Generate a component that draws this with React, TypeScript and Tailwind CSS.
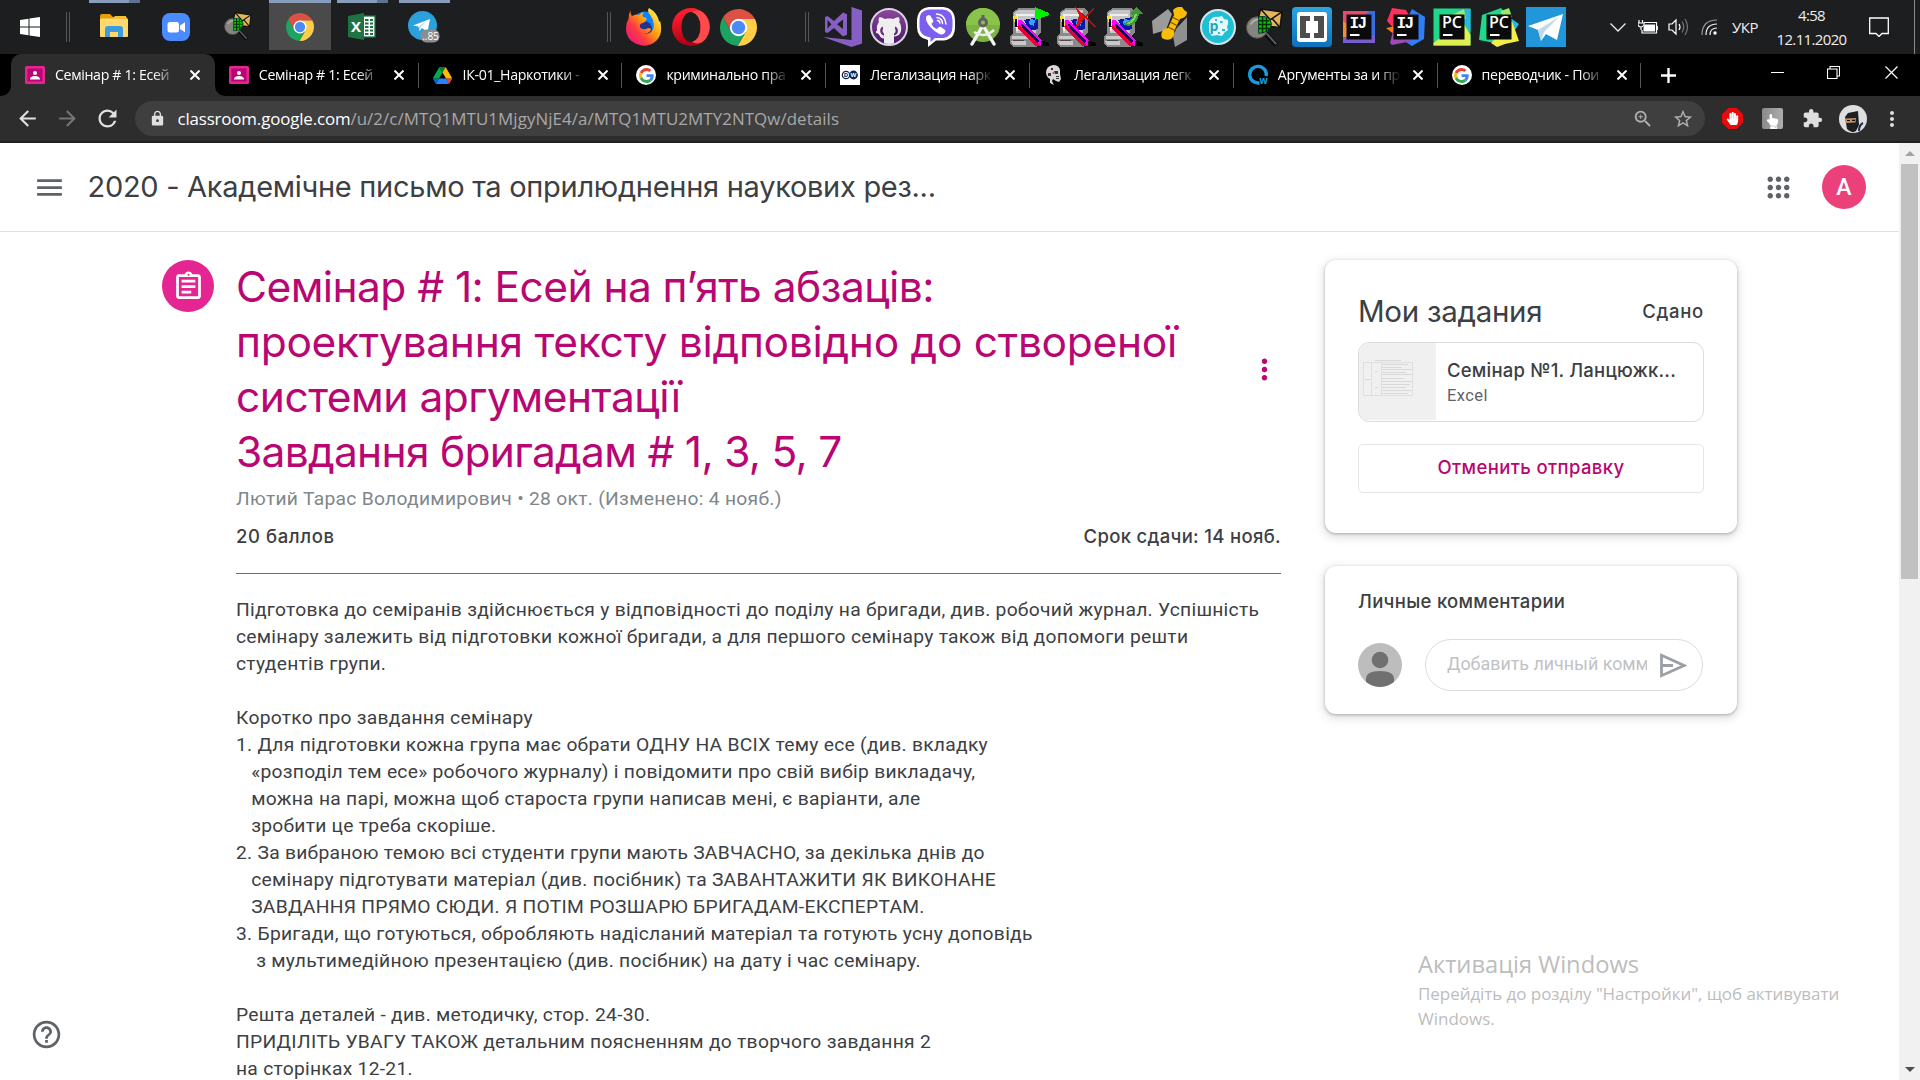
import type { ReactNode } from "react";
import {
  MdArrowBack,
  MdArrowForward,
  MdExtension,
  MdHelpOutline,
  MdLock,
  MdMenu,
  MdMoreVert,
  MdRefresh,
  MdStarBorder,
  MdZoomIn,
} from "react-icons/md";
import { FaGithubAlt, FaHandPaper, FaHandPointUp } from "react-icons/fa";

/* ---------- application icons ---------- */

function Chrome({ className }: { className: string }) {
  return (
    <svg viewBox="0 0 48 48" className={className}>
      <path d="M3.8 11.05A24 24 0 0 1 45.3 13H24V24L14.47 29.5Z" fill="#dd5144" />
      <path d="M45.3 13A24 24 0 0 1 22.88 47.95L33.53 29.5L24 24V13Z" fill="#ffcd46" />
      <path d="M22.88 47.95A24 24 0 0 1 3.8 11.05L14.47 29.5L24 24L33.53 29.5Z" fill="#1da462" />
      <circle cx="24" cy="24" r="11.2" fill="#fff" />
      <circle cx="24" cy="24" r="8.8" fill="#4c8bf5" />
    </svg>
  );
}

function Explorer() {
  return (
    <svg viewBox="0 0 28 25" className="h-[25px] w-[28px]">
      <path d="M0 2a2 2 0 0 1 2-2h8l3 3h13a1.500 1.500 0 0 1 1.500 1.500V20H0Z" fill="#e3a008" />
      <path d="M1 4h12l2-2h11v4H1Z" fill="#f5bf3c" />
      <path d="M0 5h28v17a1 1 0 0 1-1 1H1a1 1 0 0 1-1-1Z" fill="#ffd96b" />
      <path d="M5 23v-8a3 3 0 0 1 3-3h12a3 3 0 0 1 3 3v8h-5v-5h-8v5Z" fill="#3f9be0" />
    </svg>
  );
}

function Zoom() {
  return (
    <svg viewBox="0 0 28 28" className="h-[28px] w-[28px]">
      <rect width="28" height="28" rx="8" fill="#4a8cff" />
      <rect x="5.500" y="9" width="11.500" height="10.500" rx="2.500" fill="#fff" />
      <path d="M18 12.500l5-3.300v10l-5-3.300Z" fill="#fff" />
    </svg>
  );
}

function MailMagnifier({ className }: { className: string }) {
  return (
    <svg viewBox="0 0 38 40" className={className}>
      <path d="M20 26L31 38" stroke="#0c0c0c" strokeWidth="5" />
      <path d="M21 26L31 37" stroke="#5d5d5d" strokeWidth="2" />
      <circle cx="11.500" cy="20" r="11" fill="#85857f" stroke="#55554f" />
      <path d="M5 17q3-6 9-5" stroke="#b9b9b2" strokeWidth="1.500" fill="none" />
      <path d="M15 1L37 4L35 20L24 19L13 9Z" fill="#e3b45a" stroke="#111" strokeWidth="1.600" />
      <path d="M15 1L25 12L37 4M27 11L35 20" fill="none" stroke="#111" strokeWidth="1.500" />
      <path d="M13 9q12-2 13 7q0 9-13 10Z" fill="#00c800" stroke="#033" />
      <path d="M13 13h11M13 17h13M13 21h12M17 9v17M21 10v15" stroke="#053005" strokeWidth="1.500" />
    </svg>
  );
}

function Excel() {
  return (
    <svg viewBox="0 0 28 27" className="h-[27px] w-[28px]">
      <rect x="13" y="3" width="14" height="21" fill="#fff" stroke="#1f7244" strokeWidth="1.300" />
      <path d="M17 7h3.500M22 7h3M17 10.500h3.500M22 10.500h3M17 14h3.500M22 14h3M17 17.500h3.500M22 17.500h3M17 21h3.500M22 21h3" stroke="#1f7244" strokeWidth="2" />
      <path d="M0 3L16 0V27L0 24Z" fill="#1f7244" />
      <text x="8" y="19" textAnchor="middle" className="fill-white font-['Open_Sans'] text-[15px] font-bold">X</text>
    </svg>
  );
}

function TelegramBadge() {
  return (
    <svg viewBox="0 0 32 32" className="h-[32px] w-[32px]">
      <circle cx="14.500" cy="14.500" r="14.500" fill="#2ba0dc" />
      <path d="M5 14.500L22 8L19.500 21L14 17L11.500 20L10.500 15.500Z" fill="#fff" />
      <path d="M10.500 15.500L19 10L12 16.500L11.500 20Z" fill="#b8d4e6" />
      <rect x="12.500" y="18.500" width="19" height="13" rx="6" fill="#8d8d8d" />
      <text x="22.500" y="28.500" textAnchor="middle" className="fill-white font-['Open_Sans'] text-[10px]">..85</text>
    </svg>
  );
}

function Firefox() {
  return (
    <svg viewBox="0 0 36 38" className="h-[38px] w-[36px]">
      <defs>
        <linearGradient id="ffx" x1="1" y1="0" x2="0" y2="0.900">
          <stop offset="0.100" stopColor="#fff44f" />
          <stop offset="0.450" stopColor="#ff980e" />
          <stop offset="0.700" stopColor="#ff3647" />
          <stop offset="1" stopColor="#e31587" />
        </linearGradient>
      </defs>
      <circle cx="19" cy="16" r="12.500" fill="#0a84ff" />
      <circle cx="18" cy="21" r="8" fill="#26308f" />
      <path d="M4.500 2q-.5 4 1.500 6q4-2.500 7-1q2-2.500 5-3q-2.500 3-1 5q4 .5 3.500 2.500q-1 3-5.500 4q-2 2-.5 4.500q4 2.500 7.500 0q3 0 3 2q-3 4-7.500 3.500q7 1.500 10-5q1.500-7-3-13q-4-4-1.500-7.500q8 4.500 10 13q1 1.500 1-.5q3.500 13-3.500 20q-6 6-14 5Q3 35.500.5 25Q-1 16 2.500 11Q2.500 6 4.500 2Z" fill="url(#ffx)" />
    </svg>
  );
}

function Opera() {
  return (
    <svg viewBox="0 0 38 38" className="h-[38px] w-[38px]">
      <defs>
        <linearGradient id="opr" x1="0" y1="0" x2="0.300" y2="1">
          <stop offset="0.200" stopColor="#ff1b2d" />
          <stop offset="1" stopColor="#a70014" />
        </linearGradient>
      </defs>
      <path fillRule="evenodd" d="M19 0a19 19 0 1 1 0 38a19 19 0 1 1 0-38ZM19 4c-5 0-9.500 6-9.500 15s4.500 15 9.500 15s9.500-6 9.500-15s-4.500-15-9.500-15Z" fill="url(#opr)" />
      <path d="M20 4q6-3 11 .5a19 19 0 0 1 0 29q-5 3.500-11 .5q8.500-3 8.500-15t-8.500-15Z" fill="#ff4b4b" />
    </svg>
  );
}

function VisualStudio() {
  return (
    <svg viewBox="0 0 39 40" className="h-[40px] w-[39px]">
      <path d="M28.500 0L39 3.500V36.500L28.500 40L0 30L28.500 33Z" fill="#865fc5" />
      <path fillRule="evenodd" d="M2 10l2.500-1l6.500 5l9-8.500l4 1.800v20.400l-4 1.800l-9-8.500l-6.500 5l-2.500-1ZM4.500 13v8.500l4-4.200ZM14 17.300l6 4.700v-9.500Z" fill="#865fc5" />
    </svg>
  );
}

function GitHub() {
  return (
    <div className="relative flex size-[38px] justify-center overflow-hidden rounded-full border-2 border-[#ddd0e4] bg-gradient-to-b from-[#8b469b] to-[#4a1a66]">
      <FaGithubAlt className="mt-[4px] size-[26px] text-[#eee]" />
      <svg viewBox="0 0 34 34" className="absolute inset-0 size-full">
        <path d="M11 14h12v5q0 2-1 3v12H12V22q-1-1-1-3Z" fill="#eee" />
        <path d="M4 22q4 0 5 4q1 2 4 1.500" fill="none" stroke="#eee" strokeWidth="2" />
      </svg>
    </div>
  );
}

function Viber() {
  return (
    <svg viewBox="0 0 38 40" className="h-[40px] w-[38px]">
      <path d="M12 0h14q12 1 12 14v6q0 12-11 13.500h-8L11 40v-7Q0 31 0 20v-7Q1 1 12 0Z" fill="#fff" />
      <path d="M12 2.500h14q9.500 1 9.500 11v6q0 10-9 11.500h-8.500l-4.500 4v-4.500Q2.500 29 2.500 20v-7q0-9.500 9.500-10.500Z" fill="#7d5ff0" />
      <path d="M9 10q2.500-3.500 4.500-1l2.500 4q1 2-1.500 3.500q1 4 5.500 5.500q2-3 4-2l4 3q1.500 1.500-1.500 4q-2 1-5-.5Q12 21 9 13Z" fill="#fff" />
      <path d="M19.500 7q8.500.5 9.500 10M20 10.500q5 .5 5.500 6M20.500 13.500q2 0 2.300 2.500" fill="none" stroke="#fff" strokeWidth="1.500" strokeLinecap="round" />
    </svg>
  );
}

function AndroidStudio() {
  return (
    <svg viewBox="0 0 34 38" className="h-[38px] w-[34px]">
      <circle cx="17" cy="17" r="17" fill="#7cb342" />
      <path d="M0 17a17 17 0 0 1 34 0Z" fill="#8bc34a" />
      <path d="M16 19L6 36M18 19L28 36" stroke="#f5f5f5" strokeWidth="3.400" strokeLinecap="round" />
      <path d="M8 24q10 7 20-2" fill="none" stroke="#eee" strokeWidth="2.500" />
      <path d="M15.500 7h3v4h-3Z" fill="#616161" />
      <circle cx="17" cy="14.500" r="3.500" fill="#8bc34a" stroke="#616161" strokeWidth="3" />
    </svg>
  );
}

function PixelPc({ mark }: { mark: "play" | "cross" | "arrow" }) {
  return (
    <svg viewBox="0 0 40 40" className="size-[40px]" shapeRendering="crispEdges">
      <path d="M3 5L9 1H27L31 4V26L27 29H6L3 27Z" fill="#8a8a8a" />
      <path d="M4 6L9 3H26V26H6Z" fill="#c6c6c6" />
      <path d="M6 7H24V9H6ZM6 7H8V24H6Z" fill="#efefef" />
      <path d="M0 29L4 26H24L30 32V38L26 40H3L0 37Z" fill="#8a8a8a" />
      <path d="M2 29H20V32H2ZM1 34H16V38H3Z" fill="#c9c9c9" />
      <path d="M3 33H14V34H3Z" fill="#4a4a4a" />
      <path d="M14 13L28 10V22L20 24Z" fill="#0a18a8" />
      <path d="M20 12L25 13L24 19L19 17Z" fill="#3aa0ff" />
      <path d="M3 9H7V14H10L8 19L4 15Z" fill="#f2e23a" />
      <path d="M5 12H7V20H5Z" fill="#000" />
      <path d="M8 13L11 13L32 34L34 39H28L8 20Z" fill="#ff00ff" />
      <path d="M7 19L9 18L30 39H26L9 23Z" fill="#e8003a" />
      <path d="M11 17L13 17L29 34L28 36L26 35L12 20Z" fill="#12005c" />
      <path d="M31 34H34L39 36V39H31Z" fill="#050505" />
      {mark === "play" && <path d="M25 0L39 6L39 8L25 13Z" fill="#00f000" />}
      {mark === "cross" && (
        <>
          <path d="M18 0L24 5L27 10L23 18L18 21L21 13L22 8Z" fill="#d81414" />
          <path d="M24 14L37 2M25 6L38 20" stroke="#c01010" strokeWidth="1.500" />
        </>
      )}
      {mark === "arrow" && (
        <>
          <path d="M18 16q8 0 11-8l-3-1l6-7l7 7h-4q-2 11-11 12Z" fill="#3f9a35" />
          <path d="M22 16q7-1 9-9h2q-2 9-9 10Z" fill="#7fd069" />
        </>
      )}
    </svg>
  );
}

function NutBolt() {
  return (
    <svg viewBox="0 0 37 40" className="h-[40px] w-[37px]">
      <path d="M0 14L16 2L20 7L14 23L1 27Z" fill="#9b9b9b" />
      <path d="M24 22L35 10V33L23 40L21 29Z" fill="#8f8f8f" />
      <path d="M21 3q4-4 9-3q2 4 5 5q0 4-4 6l-3 1l-6 12q1 5-3 8q-5 2-9-1q-2-5 2-9l4-1l6-13Z" fill="#fbbc04" />
      <path d="M20 10l8 4M18 15l8 4M16 20l8 4" stroke="#6b5310" strokeWidth="1.200" />
    </svg>
  );
}

function Processing() {
  return (
    <svg viewBox="0 0 36 36" className="size-[36px]">
      <circle cx="18" cy="18" r="17" fill="#1fbfd6" stroke="#d5e5e8" strokeWidth="2" />
      <path d="M9 13q3-6 9-5l4-1l2 3l4 1v4l-1 3l1 3l-3 2l-3 4l-5-1l-5 1l-3-4Z" fill="#e6f8fb" />
      <path d="M20 12h2.500v2H20ZM22 20h3v2h-3ZM18 23h2v2h-2ZM15 10h2v2h-2Z" fill="#1fbfd6" />
      <text x="14" y="22" textAnchor="middle" className="fill-[#1fa5bd] font-['Open_Sans'] text-[14px] font-bold">p</text>
    </svg>
  );
}

function Brackets() {
  return (
    <svg viewBox="0 0 40 40" className="size-[40px]">
      <defs>
        <linearGradient id="brk" x1="0" y1="0" x2="0" y2="1">
          <stop offset="0" stopColor="#2ca5e0" />
          <stop offset="1" stopColor="#0a72bd" />
        </linearGradient>
      </defs>
      <rect width="40" height="40" rx="4" fill="url(#brk)" />
      <rect x="5" y="5" width="30" height="30" rx="3" fill="#fff" />
      <path d="M8 9h10v5h-4v12h4v5H8ZM32 9H22v5h4v12h-4v5h10Z" fill="#4d4d4d" />
    </svg>
  );
}

function JetBrains({ kind, label }: { kind: "ij" | "ij2" | "pc" | "pc2"; label: string }) {
  return (
    <svg viewBox="0 0 40 40" className="size-[40px]">
      {kind === "ij" && (
        <>
          <path d="M4 4H36V36H4Z" fill="#3a6be0" />
          <path d="M4 4H30L24 10L4 22Z" fill="#e84a6f" />
          <path d="M4 14L12 20L9 30L4 32Z" fill="#f28c38" />
          <path d="M4 30L36 28V36H4Z" fill="#7b5bd0" />
        </>
      )}
      {kind === "ij2" && (
        <>
          <path d="M6 1L20 3L24 10L10 24L1 14Z" fill="#fe315d" />
          <path d="M26 2L39 10L38 32L26 39L12 30Z" fill="#2d7ff9" />
          <path d="M0 21L10 19L9 28Z" fill="#f97a12" />
          <path d="M7 24L26 34L6 38L4 36Z" fill="#a04bb5" />
        </>
      )}
      {kind === "pc" && (
        <>
          <path d="M1.500 1.500H38.500V38.500H1.500Z" fill="#21d789" />
          <path d="M26 2H38.500V24L30 14Z" fill="#22b8e8" />
          <path d="M1.500 36L30 14L38.500 28V38.500H1.500Z" fill="#dff052" />
          <path d="M20 8L32 2L34 12Z" fill="#9be86a" />
        </>
      )}
      {kind === "pc2" && (
        <>
          <path d="M3 8L22 1L30 10L16 36L0 33Z" fill="#21d789" />
          <path d="M22 4L30 1L33 10L24 14Z" fill="#9be86a" />
          <path d="M30 10L40 17L34 26Z" fill="#22b8e8" />
          <path d="M12 36L33 14L40 34L26 37L18 40Z" fill="#f2ee4a" />
        </>
      )}
      <rect x="7.500" y="7.500" width="25" height="25" fill="#0b0b0b" />
      <text
        x={label === "PC" ? 20 : 18.5}
        y="21"
        textAnchor="middle"
        className={label === "PC" ? "fill-white font-['Open_Sans'] text-[16px] font-semibold" : "fill-white font-['Liberation_Mono'] text-[16px] font-bold tracking-[-1.500px]"}
      >
        {label}
      </text>
      <path d="M11 28h9.500" stroke="#fff" strokeWidth="2" />
    </svg>
  );
}

function TelegramSquare() {
  return (
    <svg viewBox="0 0 40 40" className="size-[40px]">
      <rect width="40" height="40" fill="#2196d8" />
      <path d="M2 19L37 7L31 33L20 27L15 34L12 23Z" fill="#fff" />
      <path d="M12 23L33 10L18 25L15 34Z" fill="#c0d8e8" />
    </svg>
  );
}

function GoogleG() {
  return (
    <span className="flex size-[20px] items-center justify-center rounded-full bg-white">
      <svg viewBox="0 0 48 48" className="size-[15px]">
        <path fill="#EA4335" d="M24 9.500c3.540 0 6.710 1.220 9.210 3.600l6.850-6.850C35.900 2.380 30.470 0 24 0 14.620 0 6.510 5.380 2.560 13.220l7.980 6.190C12.430 13.720 17.740 9.500 24 9.500z" />
        <path fill="#4285F4" d="M46.980 24.550c0-1.570-.15-3.090-.38-4.550H24v9.020h12.940c-.58 2.960-2.260 5.480-4.780 7.180l7.730 6c4.510-4.180 7.090-10.360 7.090-17.650z" />
        <path fill="#FBBC05" d="M10.530 28.590c-.48-1.450-.76-2.990-.76-4.590s.27-3.140.76-4.590l-7.980-6.190C.92 16.460 0 20.120 0 24c0 3.880.92 7.540 2.560 10.780l7.970-6.190z" />
        <path fill="#34A853" d="M24 48c6.480 0 11.930-2.130 15.890-5.810l-7.730-6c-2.150 1.450-4.920 2.300-8.160 2.300-6.260 0-11.570-4.220-13.470-9.910l-7.980 6.190C6.510 42.620 14.620 48 24 48z" />
      </svg>
    </span>
  );
}

function ClassroomIcon() {
  return (
    <svg viewBox="0 0 20 18" className="h-[18px] w-[20px]">
      <rect width="20" height="18" rx="1.500" fill="#e52592" />
      <rect x="2.500" y="2.500" width="15" height="13" fill="#b80672" />
      <circle cx="10" cy="7" r="2" fill="#fff" />
      <path d="M5 13.500q0-3.500 5-3.500t5 3.500Z" fill="#fff" />
    </svg>
  );
}

function DriveIcon() {
  return (
    <svg viewBox="0 0 87.300 78" className="h-[17px] w-[19px]">
      <path d="m6.600 66.850 3.850 6.650c.8 1.400 1.950 2.500 3.300 3.300l13.750-23.800h-27.500c0 1.550.4 3.100 1.200 4.500z" fill="#0066da" />
      <path d="m43.650 25-13.750-23.800c-1.350.8-2.500 1.900-3.300 3.300l-25.400 44a9.060 9.060 0 0 0-1.200 4.500h27.500z" fill="#00ac47" />
      <path d="m73.550 76.800c1.350-.8 2.500-1.900 3.300-3.300l1.600-2.750 7.650-13.250c.8-1.400 1.200-2.950 1.200-4.500h-27.502l5.852 11.500z" fill="#ea4335" />
      <path d="m43.650 25 13.750-23.800c-1.350-.8-2.900-1.200-4.500-1.200h-18.500c-1.600 0-3.150.45-4.500 1.200z" fill="#00832d" />
      <path d="m59.800 53h-32.300l-13.750 23.800c1.350.8 2.900 1.200 4.500 1.200h50.800c1.600 0 3.150-.45 4.500-1.200z" fill="#2684fc" />
      <path d="m73.400 26.500-12.700-22c-.8-1.400-1.950-2.500-3.300-3.300l-13.750 23.800 16.150 28h27.450c0-1.550-.4-3.100-1.200-4.500z" fill="#ffba00" />
    </svg>
  );
}

function DwIcon() {
  return (
    <svg viewBox="0 0 20 20" className="size-[20px]">
      <rect width="20" height="20" fill="#fff" />
      <circle cx="6" cy="10" r="3.700" fill="#fff" stroke="#00265c" strokeWidth="1.200" />
      <circle cx="13.500" cy="10" r="4.400" fill="#00265c" />
      <text x="6" y="12.300" textAnchor="middle" className="fill-[#00265c] font-['Open_Sans'] text-[6px] font-bold">D</text>
      <text x="13.500" y="12.300" textAnchor="middle" className="fill-white font-['Open_Sans'] text-[6px] font-bold">W</text>
    </svg>
  );
}

function CyborgIcon() {
  return (
    <svg viewBox="0 0 20 20" className="size-[20px]">
      <path d="M2 8Q2 1 9 0q6 0 7 5l0 4l1 5l-2 3l-3-1l-3-2l-1 2l2 4l-4-2v-4Q3 13 2 8Z" fill="#d8d8d8" />
      <path d="M10 6h4v3h-3ZM4 8h3v3H4ZM12 11h3v1h-3ZM7 3h2v2H7ZM12 13h3v1h-3Z" fill="#333" />
      <circle cx="9.500" cy="8" r="1" fill="#d33" />
    </svg>
  );
}

function QwIcon() {
  return (
    <svg viewBox="0 0 20 20" className="size-[20px] overflow-visible">
      <path d="M11.500 17.800A8.300 8.300 0 1 1 18.200 11" fill="none" stroke="#1a9be0" strokeWidth="3.400" />
      <text x="15.500" y="19" textAnchor="middle" className="fill-[#1a9be0] font-['Open_Sans'] text-[10px] font-bold">w</text>
    </svg>
  );
}

/* ---------- Windows taskbar ---------- */

function Separator({ className }: { className: string }) {
  return <div className={`h-[30px] w-[4px] shrink-0 border-x border-[#555] ${className}`} />;
}

function TaskCell({ children, bar = "none", active = false }: { children: ReactNode; bar?: "none" | "single" | "multi"; active?: boolean }) {
  return (
    <div className={`flex h-[50px] w-[62px] shrink-0 flex-col items-center ${active ? "bg-[#4a4a4b]" : ""}`}>
      <div className={active ? "flex h-[3px] w-[62px]" : "flex h-[3px] w-[51px]"}>
        {bar !== "none" && <div className="flex-1 bg-[#879dbb]" />}
        {bar === "multi" && <div className="w-[11px] bg-[#5f7390]" />}
      </div>
      <div className="flex flex-1 items-center">{children}</div>
    </div>
  );
}

function QuickCell({ children }: { children: ReactNode }) {
  return <div className="flex h-[54px] w-[46.950px] shrink-0 items-center justify-center">{children}</div>;
}

function Taskbar() {
  return (
    <header className="flex h-[54px] items-start bg-[#1d1e1f] font-['Open_Sans',sans-serif] text-white">
      <svg viewBox="0 0 20 20" className="mt-[17px] ml-[20px] size-[20px] shrink-0" fill="#fff">
        <path d="M0 3L8.500 1.700V9.500H0ZM9.500 1.500L20 0V9.500H9.500ZM0 10.500H8.500V18.300L0 17ZM9.500 10.500H20V20L9.500 18.500Z" />
      </svg>
      <Separator className="mt-[12px] ml-[26px]" />
      <div className="ml-[13px] flex">
        <TaskCell bar="multi"><Explorer /></TaskCell>
        <TaskCell><Zoom /></TaskCell>
        <TaskCell><MailMagnifier className="h-[29px] w-[28px]" /></TaskCell>
        <TaskCell bar="single" active><Chrome className="size-[28px]" /></TaskCell>
        <TaskCell bar="multi"><Excel /></TaskCell>
        <TaskCell bar="single"><TelegramBadge /></TaskCell>
      </div>
      <Separator className="mt-[12px] ml-[152px]" />
      <div className="ml-[10px] flex">
        <QuickCell><Firefox /></QuickCell>
        <QuickCell><Opera /></QuickCell>
        <QuickCell><Chrome className="size-[37px]" /></QuickCell>
      </div>
      <Separator className="mt-[12px] ml-[43px]" />
      <div className="ml-[10px] flex">
        <QuickCell><VisualStudio /></QuickCell>
        <QuickCell><GitHub /></QuickCell>
        <QuickCell><Viber /></QuickCell>
        <QuickCell><AndroidStudio /></QuickCell>
        <QuickCell><PixelPc mark="play" /></QuickCell>
        <QuickCell><PixelPc mark="cross" /></QuickCell>
        <QuickCell><PixelPc mark="arrow" /></QuickCell>
        <QuickCell><NutBolt /></QuickCell>
        <QuickCell><Processing /></QuickCell>
        <QuickCell><MailMagnifier className="h-[39px] w-[37px]" /></QuickCell>
        <QuickCell><Brackets /></QuickCell>
        <QuickCell><JetBrains kind="ij" label="IJ" /></QuickCell>
        <QuickCell><JetBrains kind="ij2" label="IJ" /></QuickCell>
        <QuickCell><JetBrains kind="pc" label="PC" /></QuickCell>
        <QuickCell><JetBrains kind="pc2" label="PC" /></QuickCell>
        <QuickCell><TelegramSquare /></QuickCell>
      </div>
      <div className="ml-auto flex h-[54px] shrink-0 items-center border-r border-[#8a8a8a] text-[#eee]">
        <svg viewBox="0 0 16 9" className="h-[9px] w-[16px]" fill="none" stroke="#eee" strokeWidth="1.300">
          <path d="M0.500 0.500L8 8L15.500 0.500" />
        </svg>
        <svg viewBox="0 0 20 14" className="ml-[12px] h-[14px] w-[20px]" fill="none" stroke="#fff" strokeWidth="1.200">
          <path d="M6 2.500H18.500V13H4V10" />
          <path d="M6.500 4.500H17V11.500H5.500V8Z" fill="#fff" stroke="none" />
          <path d="M19.300 6v4M1 0v3M4.500 0v3M0 3h6v2q-1 2-3 2q-2 0-3-2ZM3 7v3" />
        </svg>
        <svg viewBox="0 0 21 18" className="ml-[10px] h-[18px] w-[21px]" fill="none" stroke="#fff" strokeWidth="1.200">
          <path d="M1 6H4L8 2V16L4 12H1Z" />
          <path d="M11 6q2 3 0 6" />
          <path d="M14 3.500q3.500 5.500 0 11M17 1q5 8 0 16" stroke="#777" />
        </svg>
        <svg viewBox="0 0 17 17" className="ml-[12px] size-[17px]" fill="none" stroke="#eee" strokeWidth="1.200">
          <path d="M1 16Q1 1 16 1" stroke="#999" />
          <path d="M5 16Q5 5 16 5M9 16Q9 9 16 9" />
          <circle cx="14" cy="14" r="1.700" fill="#fff" stroke="none" />
        </svg>
        <span className="ml-[14px] w-[27px] text-[15px] tracking-[-0.4px]">УКР</span>
        <div className="ml-[15px] w-[75px] text-center text-[15px] leading-[24px] tracking-[-0.65px] whitespace-nowrap">
          <div>4:58</div>
          <div>12.11.2020</div>
        </div>
        <svg viewBox="0 0 20 20" className="mr-[25px] ml-[20px] size-[20px]" fill="none" stroke="#fff" strokeWidth="1.300">
          <path d="M0.700 1H19.300V16.500H13L10 19.500L7 16.500H0.700Z" />
        </svg>
      </div>
      <div className="h-[54px] w-[5px] shrink-0" />
    </header>
  );
}

/* ---------- browser chrome ---------- */

const tabs: { title: string; icon: ReactNode; active?: boolean; divider?: boolean }[] = [
  { title: "Семінар # 1: Есей", icon: <ClassroomIcon />, active: true },
  { title: "Семінар # 1: Есей", icon: <ClassroomIcon />, divider: true },
  { title: "IК-01_Наркотики -", icon: <DriveIcon />, divider: true },
  { title: "криминально пра", icon: <GoogleG />, divider: true },
  { title: "Легализация нарк", icon: <DwIcon />, divider: true },
  { title: "Легализация легк", icon: <CyborgIcon />, divider: true },
  { title: "Аргументы за и пр", icon: <QwIcon />, divider: true },
  { title: "переводчик - Пои", icon: <GoogleG />, divider: true },
];

function TabStrip() {
  return (
    <div className="flex h-[42px] bg-black pl-[11px] font-['Open_Sans',sans-serif] text-white">
      {tabs.map((t, i) => (
        <div
          key={i}
          className={`relative flex w-[203.800px] shrink-0 items-center pl-[14px] ${t.active ? "rounded-t-[10px] bg-[#2d2d2d]" : ""}`}
        >
          {t.active && (
            <>
              <svg viewBox="0 0 10 10" className="absolute bottom-0 -left-[10px] size-[10px]"><path d="M10 0V10H0A10 10 0 0 0 10 0Z" fill="#2d2d2d" /></svg>
              <svg viewBox="0 0 10 10" className="absolute -right-[10px] bottom-0 size-[10px]"><path d="M0 0V10H10A10 10 0 0 1 0 0Z" fill="#2d2d2d" /></svg>
            </>
          )}
          <span className="flex w-[20px] justify-center">{t.icon}</span>
          <span className="ml-[10px] w-[123px] overflow-hidden text-[14.200px] leading-[20px] tracking-[-0.350px] whitespace-nowrap [mask-image:linear-gradient(to_right,#000_80%,transparent)]">
            {t.title}
          </span>
          <svg viewBox="0 0 10 10" className="ml-[12px] size-[10px]" stroke="#fff" strokeWidth="2"><path d="M0.500 0.500L9.500 9.500M9.500 0.500L0.500 9.500" /></svg>
          {t.divider && <span className="mt-px ml-auto h-[25px] w-px bg-[#555]" />}
        </div>
      ))}
      <svg viewBox="0 0 14 14" className="mt-[14px] ml-[20px] size-[15px]" stroke="#fff" strokeWidth="2.200"><path d="M7 0V14M0 7H14" /></svg>
      <div className="mt-[12px] ml-auto flex h-[13px] items-center pr-[22px]">
        <span className="h-px w-[13px] bg-white" />
        <svg viewBox="0 0 13 13" className="ml-[43px] size-[13px]" fill="none" stroke="#fff" strokeWidth="1.100"><path d="M0.500 3H10V12.500H0.500ZM3 3V0.500H12.500V10H10" /></svg>
        <svg viewBox="0 0 13 13" className="ml-[45px] size-[13px]" stroke="#fff" strokeWidth="1.200"><path d="M0.500 0.500L12.500 12.500M12.500 0.500L0.500 12.500" /></svg>
      </div>
    </div>
  );
}

function Toolbar() {
  return (
    <div className="flex h-[47px] items-center border-b-2 border-[#202122] bg-[#2d2d2d]">
      <MdArrowBack className="ml-[15px] size-[25px] text-[#e0e0e0]" />
      <MdArrowForward className="ml-[15px] size-[25px] text-[#757575]" />
      <MdRefresh className="ml-[14px] size-[27px] text-[#e0e0e0]" />
      <div className="ml-[14px] flex h-[35px] w-[1570px] items-center rounded-full bg-[#3f3f3f] font-['Open_Sans',sans-serif]">
        <MdLock className="ml-[14px] size-[17px] text-[#e0e0e0]" />
        <span className="ml-[11.500px] text-[16.900px] leading-[24px] tracking-[-0.15px] whitespace-nowrap text-white">classroom.google.com</span>
        <span className="text-[16.900px] leading-[24px] tracking-[0.070px] whitespace-nowrap text-[#a8a8a8]">/u/2/c/MTQ1MTU1MjgyNjE4/a/MTQ1MTU2MTY2NTQw/details</span>
        <MdZoomIn className="ml-auto size-[22px] text-[#b0b0b0]" />
        <MdStarBorder className="mr-[11px] ml-[18px] size-[22px] text-[#b0b0b0]" />
      </div>
      <div className="ml-[17px] flex size-[21px] items-center justify-center bg-[#e40d0d] [clip-path:polygon(30%_0,70%_0,100%_30%,100%_70%,70%_100%,30%_100%,0_70%,0_30%)]">
        <FaHandPaper className="size-[13px] text-white" />
      </div>
      <div className="ml-[19px] flex size-[21px] items-end justify-center rounded-[2px] bg-gradient-to-r from-[#8a8a8a] to-[#adadad]">
        <FaHandPointUp className="size-[15px] text-white" />
      </div>
      <MdExtension className="ml-[19px] size-[21px] text-[#dedede]" />
      <svg viewBox="0 0 28 28" className="ml-[16px] size-[28px]">
        <circle cx="14" cy="14" r="14" fill="#dedede" />
        <path d="M6 12L9 8L19 6L20 20L17 26Q13 29 8 24Z" fill="#1c1f24" />
        <path d="M6 13.500L17 13L16.500 17.500L7 18Z" fill="#c58e63" />
        <path d="M8 15.500h3M13 15.300h3" stroke="#111" strokeWidth="1.200" />
        <path d="M20 26q0-6 4-8" fill="none" stroke="#1b2f4d" strokeWidth="2" />
      </svg>
      <MdMoreVert className="ml-[13px] size-[24px] text-[#dedede]" />
    </div>
  );
}

/* ---------- classroom page ---------- */

function AppHeader() {
  return (
    <div className="flex h-[89px] items-center border-b border-[#dfe1e3]">
      <MdMenu className="ml-[33px] size-[33px] text-[#5f6368]" />
      <h1 className="ml-[21.500px] font-['Inter',sans-serif] text-[29px] leading-[40px] tracking-[-0.290px] whitespace-nowrap text-[#3c4043]">
        2020 - Академічне письмо та оприлюднення наукових рез...
      </h1>
      <svg viewBox="0 0 24 24" className="ml-auto size-[33px]" fill="#5f6368">
        <path d="M6 8c1.100 0 2-.9 2-2s-.9-2-2-2-2 .9-2 2 .9 2 2 2zm6 12c1.100 0 2-.9 2-2s-.9-2-2-2-2 .9-2 2 .9 2 2 2zm-6 0c1.100 0 2-.9 2-2s-.9-2-2-2-2 .9-2 2 .9 2 2 2zm0-6c1.100 0 2-.9 2-2s-.9-2-2-2-2 .9-2 2 .9 2 2 2zm6 0c1.100 0 2-.9 2-2s-.9-2-2-2-2 .9-2 2 .9 2 2 2zm4-8c0 1.100.9 2 2 2s2-.9 2-2-.9-2-2-2-2 .9-2 2zm-4 2c1.100 0 2-.9 2-2s-.9-2-2-2-2 .9-2 2 .9 2 2 2zm6 6c1.100 0 2-.9 2-2s-.9-2-2-2-2 .9-2 2 .9 2 2 2zm0 6c1.100 0 2-.9 2-2s-.9-2-2-2-2 .9-2 2 .9 2 2 2z" />
      </svg>
      <div className="mr-[33px] ml-[27px] flex size-[44px] items-center justify-center rounded-full bg-[#ec407a] pt-[2px] font-['Roboto',sans-serif] text-[23px] font-medium text-white">
        A
      </div>
    </div>
  );
}

const body = `Підготовка до семіранів здійснюється у відповідності до поділу на бригади, див. робочий журнал. Успішність
семінару залежить від підготовки кожної бригади, а для першого семінару також від допомоги решти
студентів групи.

Коротко про завдання семінару
1. Для підготовки кожна група має обрати ОДНУ НА ВСІХ тему есе (див. вкладку
   «розподіл тем есе» робочого журналу) і повідомити про свій вибір викладачу,
   можна на парі, можна щоб староста групи написав мені, є варіанти, але
   зробити це треба скоріше.
2. За вибраною темою всі студенти групи мають ЗАВЧАСНО, за декілька днів до
   семінару підготувати матеріал (див. посібник) та ЗАВАНТАЖИТИ ЯК ВИКОНАНЕ
   ЗАВДАННЯ ПРЯМО СЮДИ. Я ПОТІМ РОЗШАРЮ БРИГАДАМ-ЕКСПЕРТАМ.
3. Бригади, що готуються, обробляють надісланий матеріал та готують усну доповідь
    з мультимедійною презентацією (див. посібник) на дату і час семінару.

Решта деталей - див. методичку, стор. 24-30.
ПРИДІЛІТЬ УВАГУ ТАКОЖ детальним поясненням до творчого завдання 2
на сторінках 12-21.`;

function Assignment() {
  return (
    <>
      <div className="flex size-[52px] shrink-0 items-center justify-center rounded-full bg-[#e52592]">
        <svg viewBox="0 0 24 24" className="size-[33px]" fill="#fff">
          <path d="M7 15h7v2H7zm0-4h10v2H7zm0-4h10v2H7zm12-4h-4.180C14.400 1.840 13.300 1 12 1c-1.300 0-2.400.84-2.820 2H5c-.14 0-.27.010-.4.040-.39.080-.74.280-1.010.55-.18.180-.33.400-.43.640-.1.230-.16.490-.16.770v14c0 .27.060.54.160.78s.25.450.43.640c.27.270.62.470 1.010.55.130.020.260.030.400.030h14c1.100 0 2-.9 2-2V5c0-1.100-.9-2-2-2zm-7-.25c.41 0 .75.340.75.750s-.34.750-.75.750-.75-.34-.75-.75.340-.75.750-.75zM19 19H5V5h14v14z" />
        </svg>
      </div>
      <article className="ml-[22px] w-[1045px] shrink-0">
        <div className="flex h-[218px] items-center justify-between">
          <h2 className="font-['Inter',sans-serif] text-[42.500px] leading-[55px] whitespace-nowrap text-[#b80672]">
            <div className="tracking-[-0.580px]">Семінар # 1: Есей на п’ять абзаців:</div>
            <div className="tracking-[-0.300px]">проектування тексту відповідно до створеної</div>
            <div className="tracking-[-0.490px]">системи аргументації</div>
            <div className="tracking-[-0.720px]">Завдання бригадам # 1, 3, 5, 7</div>
          </h2>
          <MdMoreVert className="size-[33px] text-[#b80672]" />
        </div>
        <p className="mt-[7px] font-['Roboto',sans-serif] text-[19.250px] leading-[27px] tracking-[0.285px] text-[#80868b]">
          Лютий Тарас Володимирович • 28 окт. (Изменено: 4 нояб.)
        </p>
        <div className="mt-[11px] flex justify-between border-b border-[#e52592] pb-[23px] font-['Inter',sans-serif] text-[18.500px] leading-[27px] font-medium text-[#3c4043]">
          <span className="tracking-[0.600px]">20 баллов</span>
          <span className="tracking-[0.320px]">Срок сдачи: 14 нояб.</span>
        </div>
        <p className="mt-[22px] font-['Roboto',sans-serif] text-[19.250px] leading-[27px] tracking-[0.270px] whitespace-pre text-[#3c4043]">
          {body}
        </p>
      </article>
    </>
  );
}

function SheetThumbnail() {
  return (
    <svg viewBox="0 0 50 37" className="mb-[8px] ml-[4px] h-[37px] w-[50px]" fill="none" stroke="#dfdfdf">
      <path d="M0.500 3.500H49.500V36.500H0.500ZM8.500 3.500V36.500M18.500 3.500V36.500" />
      <path d="M12 1.500H38M19 5.500h26M19 8.500h20M19 10.500h30M19 13.500h24M19 15.500h30M19 19.500h22M19 22.500h30M19 25.500h28M19 28.500h24M19 31.500h30M19 34.500h26M2 20.500h5M12 12.500h3M12 28.500h3" stroke="#d9d9d9" />
    </svg>
  );
}

const cardShadow = "shadow-[0_1px_3px_rgba(60,64,67,0.35),0_3px_9px_2px_rgba(60,64,67,0.15)]";

function Sidebar() {
  return (
    <aside className="ml-[44px] flex w-[412px] shrink-0 flex-col gap-[33px] font-['Inter',sans-serif] text-[#3c4043]">
      <section className={`h-[273px] rounded-[11px] bg-white px-[33px] pt-[31px] ${cardShadow}`}>
        <div className="flex h-[40px] items-center justify-between">
          <h3 className="text-[29.500px] leading-[40px] tracking-[-0.300px]">Мои задания</h3>
          <span className="text-[18.500px] leading-[27px] font-medium tracking-[0.700px]">Сдано</span>
        </div>
        <div className="mt-[11px] flex h-[80px] w-[346px] overflow-hidden rounded-[11px] border border-[#dadce0]">
          <div className="flex h-[77px] w-[77px] shrink-0 items-center bg-[#f0f0f0]">
            <SheetThumbnail />
          </div>
          <div className="pt-[14px] pl-[11px]">
            <div className="text-[18.500px] leading-[27px] font-medium tracking-[0.200px] whitespace-nowrap">Семінар №1. Ланцюжк...</div>
            <div className="font-['Roboto',sans-serif] text-[16.500px] leading-[24px] tracking-[0.400px] text-[#5f6368]">Excel</div>
          </div>
        </div>
        <div className="mt-[22px] flex h-[49px] w-[346px] items-center justify-center rounded-[5px] border border-[#e4e6e9] pb-[2px] text-[18.500px] font-medium tracking-[0.380px] text-[#b80672]">
          Отменить отправку
        </div>
      </section>
      <section className={`h-[148px] rounded-[11px] bg-white px-[33px] pt-[22px] ${cardShadow}`}>
        <h3 className="text-[18.500px] leading-[27px] font-medium tracking-[0.300px]">Личные комментарии</h3>
        <div className="mt-[24px] flex items-center">
          <svg viewBox="0 0 44 44" className="size-[44px]">
            <clipPath id="person"><circle cx="22" cy="22" r="22" /></clipPath>
            <g clipPath="url(#person)">
              <rect width="44" height="44" fill="#bdbdbd" />
              <circle cx="22" cy="17" r="8.300" fill="#707070" />
              <path d="M8 44V36Q8 28 22 28Q36 28 36 36V44Z" fill="#707070" />
            </g>
          </svg>
          <div className="ml-[23px] flex h-[52px] w-[278px] items-center rounded-full border border-[#dadce0]">
            <span className="mb-[3px] ml-[21px] w-[200px] overflow-hidden font-['Roboto',sans-serif] text-[17.875px] leading-[27px] whitespace-nowrap text-[#bfc2c6]">Добавить личный комм</span>
            <svg viewBox="0 0 27 25" className="ml-[13px] h-[25px] w-[27px]" fill="none" stroke="#9aa0a6" strokeWidth="2.800">
              <path d="M1.500 2.300L24 12.500L1.500 22.700ZM1.500 12.500H13" />
            </svg>
          </div>
        </div>
      </section>
    </aside>
  );
}

function Scrollbar() {
  return (
    <div className="flex w-[21px] shrink-0 flex-col items-center bg-[#f1f1f1]">
      <div className="flex h-[21px] items-center"><div className="border-x-[5px] border-b-[5px] border-x-transparent border-b-[#a3a3a3]" /></div>
      <div className="h-[415px] w-[17px] bg-[#c1c1c1]" />
      <div className="mt-auto flex h-[21px] items-center"><div className="border-x-[5px] border-t-[5px] border-x-transparent border-t-[#505050]" /></div>
    </div>
  );
}

export default function App() {
  return (
    <div className="flex h-[1080px] w-[1920px] flex-col overflow-hidden bg-white">
      <Taskbar />
      <TabStrip />
      <Toolbar />
      <div className="relative flex h-[937px]">
        <div className="flex min-w-0 flex-1 flex-col">
          <AppHeader />
          <main className="flex min-h-0 flex-1 items-start overflow-hidden pt-[28px] pl-[162px]">
            <Assignment />
            <Sidebar />
          </main>
        </div>
        <Scrollbar />
        <MdHelpOutline className="absolute bottom-[29px] left-[30px] size-[33px] text-[#5f6368]" />
        <div className="absolute top-[802px] left-[1418px] font-['Open_Sans',sans-serif] whitespace-nowrap text-[#bdbdbd]">
          <div className="text-[23.700px] leading-[38px]">Активація Windows</div>
          <div className="-mt-[2px] text-[17px] leading-[25px] tracking-[-0.060px]">Перейдіть до розділу "Настройки", щоб активувати</div>
          <div className="text-[17px] leading-[25px]">Windows.</div>
        </div>
      </div>
    </div>
  );
}
